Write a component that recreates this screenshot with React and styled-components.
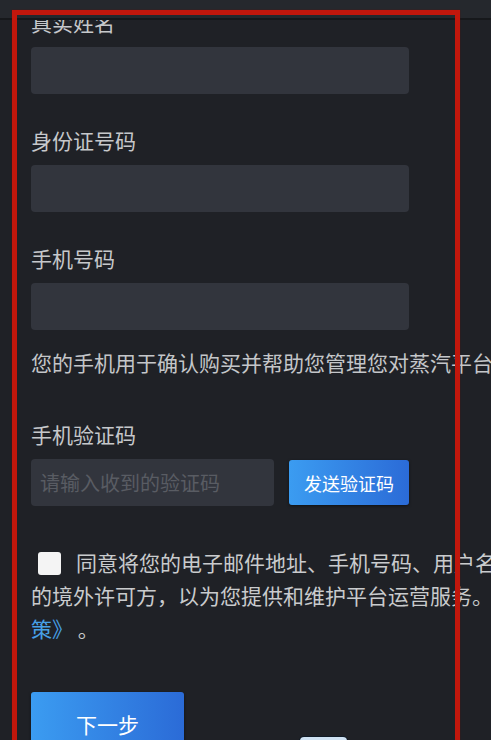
import styled, { createGlobalStyle } from 'styled-components'

const GlobalStyle = createGlobalStyle`
  html, body {
    margin: 0;
    padding: 0;
    background: #1f2126;
    overflow: hidden;
  }

  body {
    font-family: 'Noto Sans CJK SC', 'Noto Sans', sans-serif;
    color: #c6c8cb;
  }
`

const Page = styled.div`
  position: relative;
  width: 491px;
  height: 740px;
  overflow: hidden;
`

const TopBar = styled.div`
  position: absolute;
  top: 0;
  left: 0;
  right: 0;
  height: 18px;
  background: #25282d;
  border-bottom: 2px solid #16181b;
  z-index: 2;
`

const Highlight = styled.div`
  position: absolute;
  top: 10px;
  left: 12px;
  width: 448px;
  height: 800px;
  box-sizing: border-box;
  border: 5px solid #c2170c;
  box-shadow: 0 0 1px rgba(120, 10, 5, 0.8);
  z-index: 3;
  pointer-events: none;
`

const Form = styled.div`
  display: flex;
  flex-direction: column;
  padding: 9px 0 0 31px;
  width: 900px;
`

const Label = styled.div`
  font-size: 21px;
  line-height: 26px;
  margin-top: ${(p) => p.$top || 0}px;
  margin-bottom: 12px;
`

const Input = styled.div`
  width: ${(p) => p.$width || 378}px;
  height: 47px;
  box-sizing: border-box;
  background: #32353d;
  border-radius: 4px;
  display: flex;
  align-items: center;
  padding-left: 9px;
  font-size: 20px;
  color: #595c63;
`

const Helper = styled.div`
  margin-top: 19px;
  font-size: 21px;
  line-height: 26px;
  white-space: nowrap;
  color: #c4c6c9;
`

const CodeRow = styled.div`
  display: flex;
  align-items: center;
  gap: 15px;
`

const Button = styled.div`
  width: ${(p) => p.$width}px;
  height: ${(p) => p.$height}px;
  display: flex;
  align-items: center;
  justify-content: center;
  background: linear-gradient(90deg, #3b9cf1 0%, #2b6bd7 100%);
  border-radius: 3px;
  box-shadow: 0 1px 3px rgba(0, 0, 0, 0.5);
  color: #ffffff;
  font-size: ${(p) => p.$size}px;
`

const Agreement = styled.div`
  margin-top: 40px;
  font-size: 21px;
  line-height: 33px;
  white-space: nowrap;
  color: #c9cbcd;
`

const Checkbox = styled.span`
  display: inline-block;
  width: 23px;
  height: 23px;
  margin: 0 15px 0 7px;
  background: #f4f4f4;
  border-radius: 3px;
  vertical-align: -4px;
`

const Link = styled.span`
  color: #47a0e6;
`

const Footer = styled.div`
  margin-top: 47px;
`

const Peek = styled.div`
  position: absolute;
  left: 300px;
  top: 737px;
  width: 47px;
  height: 30px;
  border-radius: 4px;
  background: #cfe2f3;
  box-shadow: 0 0 0 1px #0f1a26;
`

const App = () => {
  return (
    <Page>
      <GlobalStyle />
      <TopBar />
      <Form>
        <Label>真实姓名</Label>
        <Input />
        <Label $top={33}>身份证号码</Label>
        <Input />
        <Label $top={33}>手机号码</Label>
        <Input />
        <Helper>您的手机用于确认购买并帮助您管理您对蒸汽平台帐户的访问。</Helper>
        <Label $top={46}>手机验证码</Label>
        <CodeRow>
          <Input $width={243}>请输入收到的验证码</Input>
          <Button $width={120} $height={45} $size={18}>
            发送验证码
          </Button>
        </CodeRow>
        <Agreement>
          <Checkbox />
          同意将您的电子邮件地址、手机号码、用户名和 IP 地址提供给蒸汽平台
          <br />
          的境外许可方，以为您提供和维护平台运营服务。详见
          <Link>《蒸汽平台隐私政</Link>
          <br />
          <Link>策》</Link> 。
        </Agreement>
        <Footer>
          <Button $width={153} $height={64} $size={21}>
            下一步
          </Button>
        </Footer>
      </Form>
      <Peek />
      <Highlight />
    </Page>
  )
}

export default App
